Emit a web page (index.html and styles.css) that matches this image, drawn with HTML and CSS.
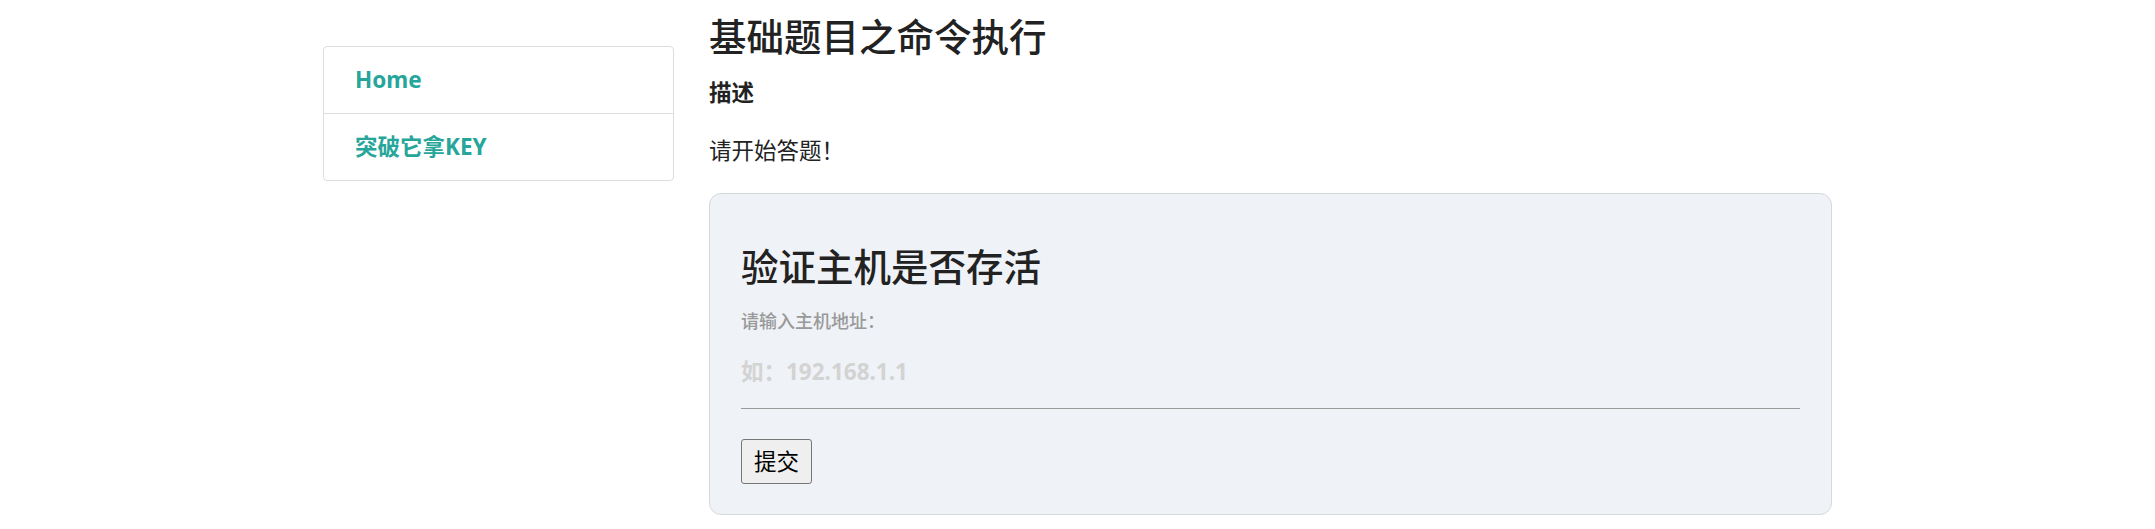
FILE: index.html
```html
<!DOCTYPE html>
<html lang="zh-CN">
<head>
    <meta charset="UTF-8">
    <meta name="viewport" content="width=device-width, initial-scale=1.0">
    <title>基础题目之命令执行</title>
    <link rel="stylesheet" href="styles.css">
</head>
<body>

<div class="container">
    <div class="sidebar">
        <a href="#" class="nav-item">Home</a>
        <a href="#" class="nav-item">突破它拿KEY</a>
    </div>

    <div class="main">
        <h1>基础题目之命令执行</h1>
        <h5>描述</h5>
        <p class="intro">请开始答题！</p>

        <div class="card">
            <h2>验证主机是否存活</h2>
            <form>
                <label for="ip">请输入主机地址：</label>
                <input type="text" id="ip" name="ip" placeholder="如：192.168.1.1">
                <button type="button">提交</button>
            </form>
        </div>
    </div>
</div>

</body>
</html>
```

FILE: styles.css
```css
body {
    font-family: "Noto Sans", "Noto Sans CJK SC", sans-serif;
    background-color: #fff;
    color: #222;
    margin: 0;
}
.container {
    width: 1509px;
    margin: 0 auto;
    display: flex;
    align-items: flex-start;
    gap: 35px;
}
.sidebar {
    width: 351px;
    flex-shrink: 0;
    box-sizing: border-box;
    margin-top: 46px;
    border: 1px solid #ddd;
    border-radius: 4px;
}
.nav-item {
    display: block;
    height: 66px;
    line-height: 66px;
    padding: 0 31px;
    font-size: 22.5px;
    font-weight: bold;
    color: #26a69a;
    text-decoration: none;
}
.nav-item + .nav-item {
    border-top: 1px solid #ddd;
}
.main {
    flex: 1;
}
h1 {
    font-size: 37.5px;
    font-weight: 500;
    line-height: 1.2;
    margin: 14px 0 0;
}
h5 {
    font-size: 22.5px;
    font-weight: bold;
    line-height: 1.5;
    margin: 17px 0 0;
}
.intro {
    font-size: 22.5px;
    line-height: 1.5;
    margin: 24px 0 0;
}
.card {
    margin-top: 25px;
    padding: 30px 31px;
    background-color: #eff2f7;
    border: 1px solid #d5d8dc;
    border-radius: 12px;
}
.card h2 {
    font-size: 37.5px;
    font-weight: 500;
    line-height: 1.2;
    margin: 20px 0 0;
}
label {
    display: block;
    margin-top: 18px;
    font-size: 18px;
    font-weight: 500;
    color: #999;
}
input {
    display: block;
    width: 100%;
    box-sizing: border-box;
    margin-top: 15px;
    padding: 8px 0 21px;
    font-family: inherit;
    font-size: 22.5px;
    font-weight: bold;
    color: #333;
    background: transparent;
    border: none;
    border-bottom: 1px solid #999;
    outline: none;
}
input::placeholder {
    color: #d3d3d3;
}
button {
    margin-top: 30px;
    padding: 5px 12px;
    font-family: inherit;
    font-size: 22.5px;
    line-height: 1.5;
    color: #000;
    background-color: #efefef;
    border: 1px solid #767676;
    border-radius: 3px;
}
```
